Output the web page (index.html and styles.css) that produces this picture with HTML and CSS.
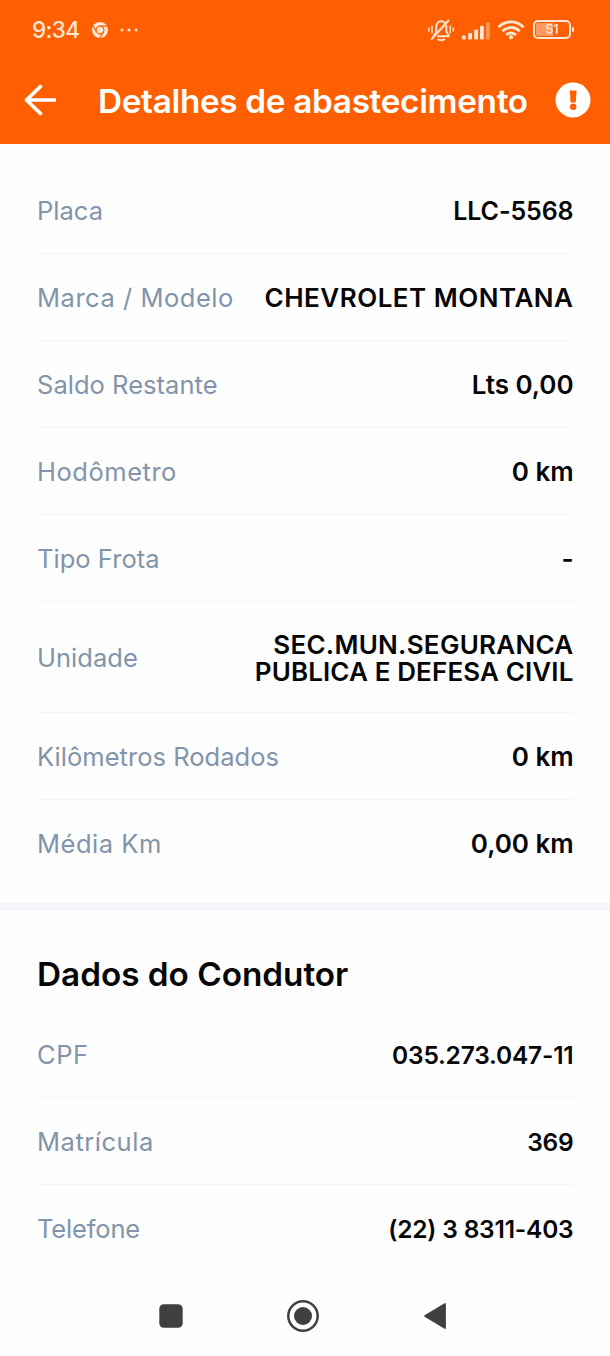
FILE: index.html
```
<!DOCTYPE html>
<html lang="pt-BR">
<head>
<meta charset="utf-8">
<title>Detalhes de abastecimento</title>
<link rel="stylesheet" href="styles.css">
</head>
<body>
<div class="screen">
  <header class="header">
    <div class="status">
      <span class="clock">9:34</span>
      <svg class="chrome" width="16" height="16" viewBox="0 0 16 16">
        <circle cx="8" cy="8" r="8" fill="#ffe6d3"/>
        <g fill="none" stroke="#ff5f00" stroke-width="1.1"><circle cx="8" cy="8" r="3.9"/><path d="M8 4.1h7.2M4.6 9.9L1 3.8M11.4 9.9L7.8 16"/></g>
      </svg>
      <svg class="dots" width="18" height="4" viewBox="0 0 18 4" fill="#ffe6d3"><circle cx="2" cy="2" r="1.5"/><circle cx="9" cy="2" r="1.5"/><circle cx="16" cy="2" r="1.5"/></svg>
      <svg class="bell" width="28" height="24" viewBox="0 0 28 24" fill="none" stroke="#ffe6d3" stroke-width="2" stroke-linecap="round" stroke-linejoin="round">
        <path d="M9.2 13.5V9.3C9.2 5.8 11 3.3 14.2 3.3c1.6 0 2.8.5 3.7 1.5M19.3 8v5.2l2.6 5.1H11.2M6.4 18.3l2.2-3M4.7 21L21.5 2.5"/>
        <path d="M11.2 21.5c1.8 1 4.2 1 6 0"/>
        <path d="M1.8 10v3M5 8v6.8M23.2 8v6.8M26.3 10v3" stroke-width="1.5"/>
      </svg>
      <svg class="signal" width="28" height="18" viewBox="0 0 28 18" fill="#ffe6d3">
        <rect x="0" y="13.5" width="3.8" height="4" rx="1"/><rect x="6.2" y="11" width="3.8" height="6.5" rx="1"/><rect x="12.2" y="7.5" width="3.8" height="10" rx="1"/><rect x="18" y="3.7" width="3.8" height="13.8" rx="1"/><rect x="24" y=".3" width="3.8" height="17.2" rx="1" opacity=".4"/>
      </svg>
      <svg class="wifi" width="28" height="20" viewBox="0 0 28 20" fill="none" stroke="#ffe6d3" stroke-width="2.9">
        <path d="M1.5 7.2C8.5.1 19.5.1 26.5 7.2M5.3 11.3c5-5 12.4-5 17.4 0M9.1 15c2.8-2.8 7-2.8 9.8 0"/><circle cx="14" cy="17.2" r="2.1" fill="#ffe6d3" stroke="none"/>
      </svg>
      <div class="battery"><span class="level">51</span></div>
      <i class="battery-tip"></i>
    </div>
    <div class="titlebar">
      <svg class="back" width="34" height="34" viewBox="0 0 34 34" fill="none" stroke="#fff" stroke-width="3.7" stroke-linejoin="round"><path d="M33 17H3.5M18.5 2.5L3.5 17l15 14.5"/></svg>
      <h1 class="title">Detalhes de abastecimento</h1>
      <svg class="alert" width="36" height="36" viewBox="0 0 36 36"><circle cx="18" cy="18" r="17.5" fill="#fff"/><path d="M14.8 8.5h6.8l-.8 11.9h-5.2z" fill="#ff5f00"/><circle cx="18.2" cy="24.8" r="3.2" fill="#ff5f00"/></svg>
    </div>
  </header>
  <main>
    <section class="rows">
      <div class="row"><span class="label snug">Placa</span><span class="value num">LLC-5568</span></div>
      <div class="row"><span class="label">Marca / Modelo</span><span class="value wide">CHEVROLET MONTANA</span></div>
      <div class="row"><span class="label snug">Saldo Restante</span><span class="value">Lts 0,00</span></div>
      <div class="row"><span class="label">Hodômetro</span><span class="value">0 km</span></div>
      <div class="row"><span class="label snug">Tipo Frota</span><span class="value">-</span></div>
      <div class="row tall"><span class="label snug">Unidade</span><span class="value unit"><span class="line">SEC.MUN.SEGURANCA</span><span class="line second">PUBLICA E DEFESA CIVIL</span></span></div>
      <div class="row"><span class="label snug">Kilômetros Rodados</span><span class="value">0 km</span></div>
      <div class="row"><span class="label">Média Km</span><span class="value">0,00 km</span></div>
    </section>
    <section class="rows driver">
      <h2 class="heading">Dados do Condutor</h2>
      <div class="row"><span class="label">CPF</span><span class="value digits">035.273.047-11</span></div>
      <div class="row"><span class="label">Matrícula</span><span class="value digits">369</span></div>
      <div class="row"><span class="label tight">Telefone</span><span class="value digits">(22) 3 8311-403</span></div>
    </section>
  </main>
  <nav class="nav">
    <svg width="24" height="24" viewBox="0 0 24 24"><rect x=".3" y=".3" width="23.4" height="23.4" rx="4.5" fill="#404040"/></svg>
    <svg width="34" height="34" viewBox="0 0 34 34"><circle cx="17" cy="17" r="14.7" fill="none" stroke="#404040" stroke-width="2.5"/><circle cx="17" cy="17" r="9" fill="#404040"/></svg>
    <svg width="24" height="28" viewBox="0 0 24 28"><path d="M2 14L22 2v24z" fill="#404040" stroke="#404040" stroke-width="1.8" stroke-linejoin="round"/></svg>
  </nav>
</div>
</body>
</html>
```
FILE: styles.css
```
* { box-sizing: border-box; }
body { margin: 0; background: #fefefe; font-family: Inter, "Liberation Sans", sans-serif; }
.screen { width: 610px; height: 1356px; overflow: hidden; background: #fefefe; }

.header { height: 144.4px; background: #ff5f00; color: #fff; }
.status { display: flex; align-items: center; height: 59px; padding-left: 32px; color: #ffe6d3; }
.clock { width: 60px; font-size: 22.5px; font-weight: 500; letter-spacing: -0.6px; }
.dots { margin-left: 12px; }
.bell { margin-left: 289px; margin-top: 1px; }
.signal { margin-left: 7px; margin-top: 3px; }
.wifi { margin-left: 7px; margin-top: 1px; }
.battery { width: 38px; height: 19px; margin-left: 8px; border: 2px solid #ffe6d3; border-radius: 5px; background: linear-gradient(90deg, #ff9a5e 52%, transparent 52%); background-origin: content-box; background-clip: content-box; padding: 1px; display: flex; align-items: center; justify-content: center; }
.level { font-size: 12.5px; font-weight: 600; line-height: 13px; }
.battery-tip { width: 2px; height: 5px; margin-left: 1px; border-radius: 1px; background: #ffe6d3; }

.titlebar { display: flex; align-items: center; height: 81.5px; padding-left: 23px; }
.title { margin: 0 0 0 41px; width: 430px; padding-top: 2px; font-size: 33.3px; font-weight: 600; line-height: 40px; letter-spacing: -0.32px; white-space: nowrap; }
.alert { margin-left: 27px; }

.rows { padding: 22.6px 37px 15px; }
.row { display: flex; align-items: center; justify-content: space-between; height: 87px; border-bottom: 1px solid #f3f4f5; white-space: nowrap; }
.row:last-child { border-bottom-color: transparent; }
.tall { height: 111px; }
.label { padding-top: 2px; color: #8294aa; font-size: 25.5px; letter-spacing: 0.53px; }
.snug { letter-spacing: 0.03px; }
.tight { letter-spacing: -0.15px; }
.value { padding-top: 1px; margin-right: -0.5px; color: #060606; font-size: 26px; font-weight: 600; line-height: 27px; text-align: right; letter-spacing: -0.05px; }
.wide { letter-spacing: 0.5px; }
.unit { padding-top: 2px; letter-spacing: 0.28px; }
.line { display: block; }
.second { letter-spacing: 0.12px; }
.num { padding-top: 3px; font-size: 25px; letter-spacing: -0.1px; }
.digits { padding-top: 3px; font-size: 24.5px; letter-spacing: -0.2px; }

.driver { padding-top: 43px; padding-bottom: 0; border-top: 9px solid #f4f6f9; }
.heading { height: 41px; margin: 0 0 16px; color: #060606; font-size: 33.3px; font-weight: 600; line-height: 41px; letter-spacing: -0.02px; }

.nav { display: flex; align-items: center; height: 88px; padding-left: 159px; }
.nav svg:nth-child(2) { margin-left: 103px; }
.nav svg:nth-child(3) { margin-left: 103px; }
```
